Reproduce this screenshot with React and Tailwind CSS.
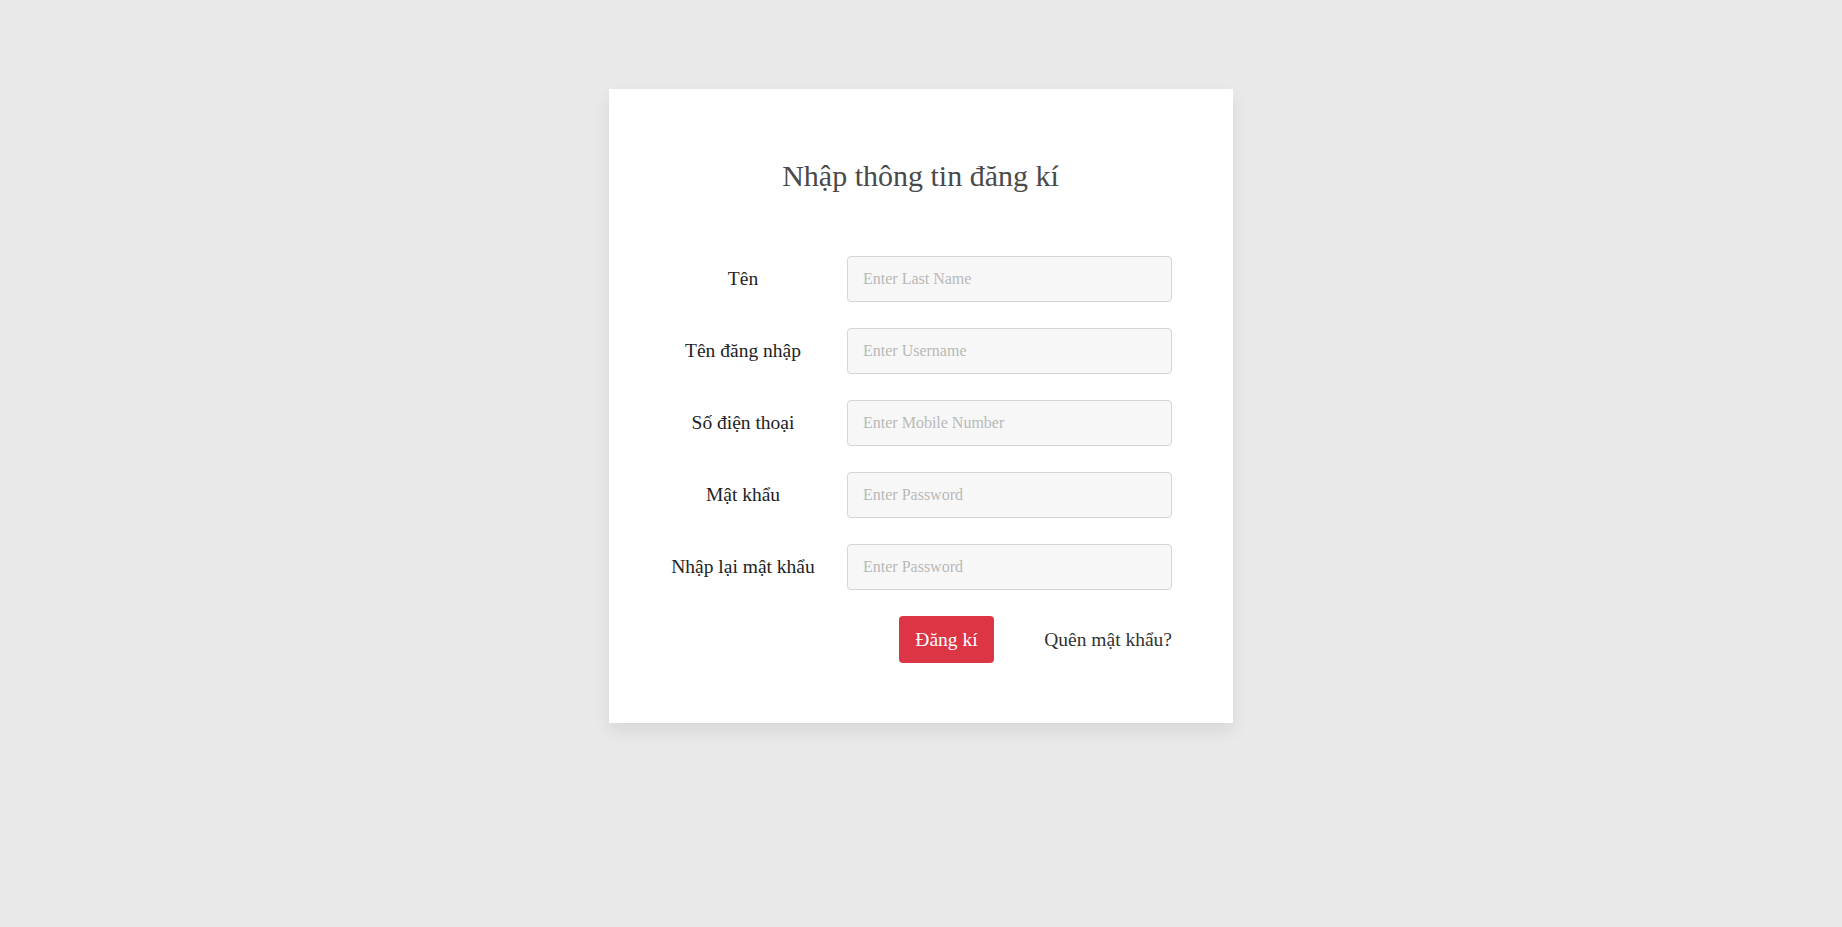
import React from "react";

const fields = [
  { label: "Tên", placeholder: "Enter Last Name", type: "text" },
  { label: "Tên đăng nhập", placeholder: "Enter Username", type: "text" },
  { label: "Số điện thoại", placeholder: "Enter Mobile Number", type: "text" },
  { label: "Mật khẩu", placeholder: "Enter Password", type: "password" },
  { label: "Nhập lại mật khẩu", placeholder: "Enter Password", type: "password" }
];

export default function App() {
  return (
    <div
      className="min-h-screen w-full bg-[#e9e9e9] pt-[89px]"
      style={{ fontFamily: '"Liberation Serif", "DejaVu Serif", serif' }}
    >
      <div className="mx-auto w-[624px] bg-white pl-[60px] pr-[61px] pt-[69px] pb-[60px] shadow-[0_8px_16px_rgba(0,0,0,0.08)]">
        <h1 className="text-center text-[30px] leading-[36px] text-[#4a4a4a] mb-[62px]">
          Nhập thông tin đăng kí
        </h1>

        <form
          className="flex flex-col gap-[26px]"
          onSubmit={e => e.preventDefault()}
        >
          {fields.map(f => (
            <div key={f.label} className="flex items-center">
              <label className="w-[148px] text-center text-[19.5px] text-[#222]">
                {f.label}
              </label>
              <input
                type={f.type}
                placeholder={f.placeholder}
                className="ml-[30px] h-[46px] w-[325px] rounded-[4px] border border-[#d4d6d9] bg-[#f7f7f7] px-[15px] text-[16px] text-[#333] placeholder:text-[#b9b9b9] outline-none"
              />
            </div>
          ))}

          <div className="flex items-center">
            <button
              type="submit"
              className="ml-[230px] h-[47px] w-[95px] rounded-[4px] bg-[#dc3545] text-[19.5px] text-white"
            >
              Đăng kí
            </button>
            <a href="#" className="ml-auto text-[19.5px] text-[#333]">
              Quên mật khẩu?
            </a>
          </div>
        </form>
      </div>
    </div>
  );
}
